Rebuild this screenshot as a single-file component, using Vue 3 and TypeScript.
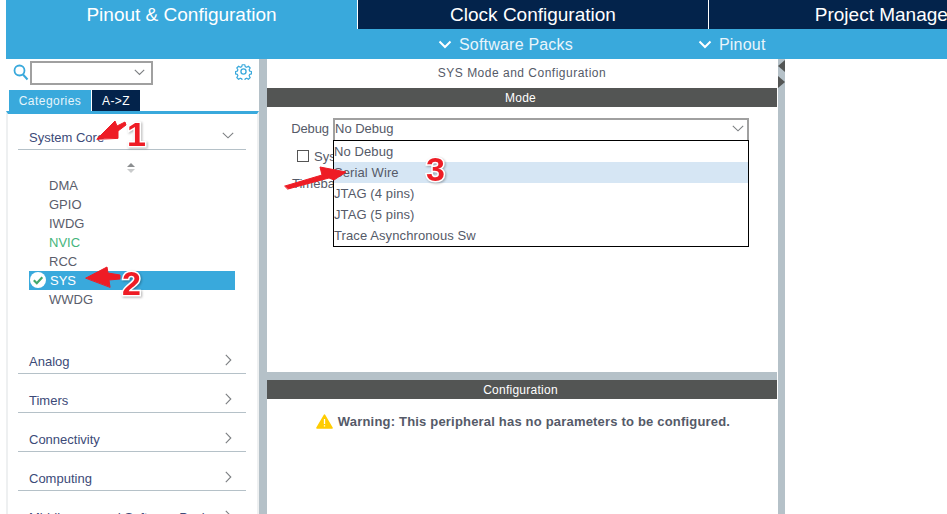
<script setup lang="ts">
const tabs = [
  { label: 'Pinout & Configuration', cls: 'tab-active' },
  { label: 'Clock Configuration', cls: 'tab-dark' },
  { label: 'Project Manager', cls: 'tab-dark tab-last' },
]
const peripherals = ['DMA', 'GPIO', 'IWDG', 'NVIC', 'RCC', 'SYS', 'WWDG']
const groups = ['Analog', 'Timers', 'Connectivity', 'Computing', 'Middleware and Software Packs']
const options = ['No Debug', 'Serial Wire', 'JTAG (4 pins)', 'JTAG (5 pins)', 'Trace Asynchronous Sw']
</script>

<template>
  <div class="page">
    <header class="head">
      <nav class="tabs">
        <div v-for="t in tabs" :key="t.label" class="tab" :class="t.cls">{{ t.label }}</div>
      </nav>
      <div class="subbar">
        <div class="sub sub-packs">
          <svg width="14" height="9" viewBox="0 0 14 9"><path d="M1.500 1.500 7 7l5.500-5.500" fill="none" stroke="#fff" stroke-width="2"/></svg>
          <span>Software Packs</span>
        </div>
        <div class="sub sub-pinout">
          <svg width="14" height="9" viewBox="0 0 14 9"><path d="M1.500 1.500 7 7l5.500-5.500" fill="none" stroke="#fff" stroke-width="2"/></svg>
          <span>Pinout</span>
        </div>
      </div>
    </header>

    <main class="body">
      <aside class="side">
        <div class="search">
          <svg class="lens" width="16" height="17" viewBox="0 0 16 17"><circle cx="6.500" cy="6.500" r="5" fill="none" stroke="#39a9dc" stroke-width="1.800"/><path d="M10 10.500l4.500 5" stroke="#39a9dc" stroke-width="2"/></svg>
          <div class="combo">
            <svg width="11" height="7" viewBox="0 0 11 7"><path d="M.8.8 5.500 5.500 10.200.8" fill="none" stroke="#7c7f82" stroke-width="1.100"/></svg>
          </div>
          <svg class="gear" width="17" height="17" viewBox="0 0 24 24">
            <g fill="none" stroke="#39a9dc" stroke-width="1.900" stroke-linejoin="round">
              <circle cx="12" cy="12" r="3.600"/>
              <path d="M10 1.500h4l.7 3 2.300 1 2.700-1.700 2.800 2.800-1.700 2.700 1 2.300 2.700.5v3.800l-2.700.6-1 2.300 1.700 2.700-2.800 2.800-2.700-1.700-2.300 1-.7 2.900h-4l-.7-2.900-2.300-1-2.700 1.700-2.800-2.800 1.700-2.700-1-2.300-2.700-.6v-3.800l2.700-.5 1-2.300-1.700-2.700 2.800-2.800 2.700 1.700 2.300-1z" transform="translate(1.200 1.100) scale(.9)"/>
            </g>
          </svg>
        </div>
        <div class="cat-tabs">
          <div class="cat cat-on">Categories</div>
          <div class="cat cat-off">A-&gt;Z</div>
        </div>
        <div class="tree">
          <div class="group group-open">
            <span>System Core</span>
            <svg width="12" height="7" viewBox="0 0 12 7"><path d="M.8.8 6 5.800 11.200.8" fill="none" stroke="#7c7f82" stroke-width="1.100"/></svg>
          </div>
          <div class="sort">
            <i class="sort-up"></i><i class="sort-down"></i>
          </div>
          <ul class="items">
            <li v-for="p in peripherals" :key="p" class="item" :class="{ 'item-green': p === 'NVIC', 'item-on': p === 'SYS' }">
              <svg v-if="p === 'SYS'" class="ok" width="16" height="16" viewBox="0 0 16 16"><circle cx="8" cy="8" r="8" fill="#fff"/><path d="M3.800 8.200 6.800 11.200 12.300 5.200" fill="none" stroke="#41a86b" stroke-width="2.200"/></svg>
              {{ p }}
            </li>
          </ul>
          <div v-for="g in groups" :key="g" class="group">
            <span>{{ g }}</span>
            <svg width="7" height="12" viewBox="0 0 7 12"><path d="M.8.8 5.800 6 .8 11.200" fill="none" stroke="#7c7f82" stroke-width="1.100"/></svg>
          </div>
        </div>
      </aside>

      <div class="gutter"></div>

      <section class="center">
        <div class="mode">
          <div class="title">SYS Mode and Configuration</div>
          <div class="bar">Mode</div>
          <div class="form">
            <div class="debug-row">
              <label class="debug-label">Debug</label>
              <div class="select">
                <span>No Debug</span>
                <svg width="12" height="7" viewBox="0 0 12 7"><path d="M.8.8 6 5.800 11.200.8" fill="none" stroke="#7c7f82" stroke-width="1.100"/></svg>
              </div>
            </div>
            <div class="behind">
              <div class="check-row"><i class="check"></i><span>Sys</span></div>
              <div class="timebase">Timebase</div>
            </div>
            <ul class="menu">
              <li v-for="o in options" :key="o" class="opt" :class="{ 'opt-hover': o === 'Serial Wire' }">{{ o }}</li>
            </ul>
          </div>
        </div>
        <div class="config">
          <div class="bar">Configuration</div>
          <div class="warn">
            <svg width="17" height="15" viewBox="0 0 17 15"><path d="M8.500 1.200 16 14H1z" fill="#fc0" stroke="#fc0" stroke-width="1.600" stroke-linejoin="round"/><path d="M8.500 5v5M8.500 11.200v1.400" stroke="#fff" stroke-width="1.300"/></svg>
            <span>Warning: This peripheral has no parameters to be configured.</span>
          </div>
        </div>
      </section>

      <div class="splitter">
        <i class="tri-left"></i>
        <i class="tri-right"></i>
      </div>
      <div class="right"></div>
    </main>

    <!-- hand-drawn annotations lying over the screenshot -->
    <svg class="notes" width="947" height="514" viewBox="0 0 947 514">
      <g fill="#ee1c25" stroke="#ee1c25" stroke-linejoin="round" stroke-linecap="round" stroke-width="1">
        <path d="M97 139 115 121 117 126 125 122 126 125 118 131 118 138z"/>
        <path d="M86 278 107 267 108 273 120 275 120 279 109 280 110 287z"/>
        <path d="M285 186 322 175 320 167 346 172 334 180 329 178 288 189z"/>
      </g>
      <g class="num">
        <text x="127" y="146">1</text>
        <text x="122" y="295">2</text>
        <text x="426" y="181">3</text>
      </g>
    </svg>
  </div>
</template>

<style>
html, body { margin: 0; background: #fff; }
</style>

<style scoped>
.page {
  position: relative;
  width: 947px;
  height: 514px;
  overflow: hidden;
  background: #fff;
  display: flex;
  flex-direction: column;
  font-family: "Liberation Sans", Arial, sans-serif;
  color: #4d5366;
}
.head { margin-left: 6px; }
.tabs { display: flex; height: 29px; }
.tab {
  width: 351px;
  flex: none;
  margin-right: 1px;
  font-size: 19px;
  line-height: 29px;
  text-align: center;
  color: #fff;
}
.tab-active { background: #39a9dc; }
.tab-dark { background: #03234b; }
.tab-dark:nth-child(2) { width: 350px; }
.tab-last { margin-right: 0; }
.subbar {
  height: 30px;
  background: #39a9dc;
  display: flex;
  color: #e9f5fb;
  font-size: 16px;
  letter-spacing: .2px;
}
.sub { display: flex; align-items: center; gap: 7px; padding-top: 1px; }
.sub-packs { margin-left: 432px; }
.sub-pinout { margin-left: 125px; }

.body { flex: 1; display: flex; min-height: 0; }
.side { width: 253px; margin-left: 6px; flex: none; display: flex; flex-direction: column; }
.search { height: 31px; box-sizing: border-box; display: flex; align-items: center; padding: 0 6px 4px 7px; }
.lens { flex: none; margin-right: 1px; }
.combo {
  width: 113px;
  height: 20px;
  border: 2px solid #a0a0a0;
  display: flex;
  align-items: center;
  justify-content: flex-end;
  padding-right: 6px;
  flex: none;
}
.gear { margin-left: auto; margin-right: 1px; margin-top: -2px; }
.cat-tabs { display: flex; height: 21px; padding-left: 3px; gap: 1px; }
.cat { font-size: 12px; line-height: 22px; text-align: center; color: #fff; letter-spacing: .45px; }
.cat-on { width: 82px; background: #39a9dc; color: #e7f5fb; }
.cat-off { width: 48px; background: #03234b; }
.tree {
  flex: 1;
  border-top: 3px solid #39a9dc;
  border-left: 2px solid #eef0f1;
  border-right: 2px solid #eef0f1;
  padding: 0 11px 0 10px;
  min-height: 0;
}
.group {
  height: 38px;
  border-bottom: 1px solid #b5c1c8;
  display: flex;
  align-items: flex-end;
  justify-content: space-between;
  padding: 0 14px 0 11px;
  font-size: 13px;
  line-height: 16px;
  color: #3c4a78;
}
.group span { padding-bottom: 3px; }
.group svg { margin-bottom: 7px; }
.group-open { height: 35px; }
.group-open svg { margin-bottom: 10px; margin-right: -2px; }
.sort {
  height: 26px;
  box-sizing: border-box;
  padding-top: 13px;
  display: flex;
  flex-direction: column;
  align-items: center;
  gap: 2px;
  width: 226px;
}
.sort i { display: block; width: 0; height: 0; border-left: 4px solid transparent; border-right: 4px solid transparent; }
.sort-up { border-bottom: 4px solid #8b8e90; }
.sort-down { border-top: 4px solid #c9cbcc; }
.items { list-style: none; margin: 0 0 26px 0; padding: 0 0 0 11px; height: 133px; }
.item {
  position: relative;
  width: 186px;
  height: 19px;
  padding-left: 20px;
  font-size: 13px;
  line-height: 19px;
  color: #5a5d6b;
}
.item-green { color: #45b57c; }
.item-on { background: #39a9dc; color: #fff; padding-left: 21px; width: 185px; }
.ok { position: absolute; left: 1px; top: 1px; }

.gutter { width: 8px; flex: none; background: #b5c1c8; }
.center { width: 510px; flex: none; display: flex; flex-direction: column; background: #b5c1c8; }
.mode { height: 313px; background: #fff; flex: none; margin-bottom: 8px; }
.title { height: 29px; font-size: 12px; line-height: 29px; text-align: center; letter-spacing: .5px; color: #555a68; }
.bar {
  height: 19px;
  background: #535554;
  color: #fff;
  font-size: 12px;
  line-height: 20px;
  text-align: center;
  letter-spacing: .25px;
  padding-right: 3px;
  box-sizing: border-box;
}
.form { position: relative; }
.debug-row { display: flex; align-items: center; padding-top: 11px; height: 22px; }
.debug-label { width: 62px; text-align: right; font-size: 13px; line-height: 20px; margin-right: 4px; letter-spacing: -.1px; color: #555a68; }
.select {
  width: 416px;
  height: 22px;
  box-sizing: border-box;
  border: 2px solid #a0a0a0;
  border-bottom: 0;
  display: flex;
  align-items: center;
  justify-content: space-between;
  padding: 0 3px 3px 0;
  font-size: 13px;
  color: #555a68;
}
.behind { position: absolute; left: 25px; top: 43px; font-size: 13px; color: #555a68; }
.check-row { display: flex; align-items: center; gap: 5px; margin-left: 5px; height: 12px; }
.check { display: block; width: 12px; height: 12px; box-sizing: border-box; border: 1px solid #555; }
.timebase { margin-top: 14px; }
.menu {
  position: absolute;
  left: 66px;
  top: 33px;
  width: 416px;
  height: 107px;
  box-sizing: border-box;
  margin: 0;
  padding: 0;
  list-style: none;
  background: #fff;
  border: 1px solid #000;
}
.opt {
  height: 21px;
  line-height: 21px;
  font-size: 13px;
  letter-spacing: .1px;
  color: #555a68;
}
.opt-hover { background: #d6e6f4; }
.config { flex: 1; background: #fff; min-height: 0; }
.warn {
  display: flex;
  align-items: center;
  justify-content: center;
  gap: 5px;
  height: 44px;
  font-size: 13px;
  font-weight: 700;
  letter-spacing: .19px;
  color: #555a68;
  padding-left: 2px;
}
.splitter { width: 7px; margin-left: 1px; flex: none; background: #b5c1c8; position: relative; }
.tri-left, .tri-right { position: absolute; left: 0; width: 0; height: 0; border-top: 6px solid transparent; border-bottom: 6px solid transparent; }
.tri-left { top: 1px; border-right: 7px solid #535554; }
.tri-right { top: 17px; border-left: 7px solid #535554; }
.right { flex: 1; background: #fff; }
.notes { position: absolute; left: 0; top: 0; pointer-events: none; }
.num text {
  font-family: "Liberation Sans", sans-serif;
  font-weight: 700;
  font-size: 34px;
  fill: #ee1c25;
  stroke: #fff;
  stroke-width: 3px;
  paint-order: stroke;
  filter: drop-shadow(1px 1px 1px rgba(0, 0, 0, .3));
}
</style>
